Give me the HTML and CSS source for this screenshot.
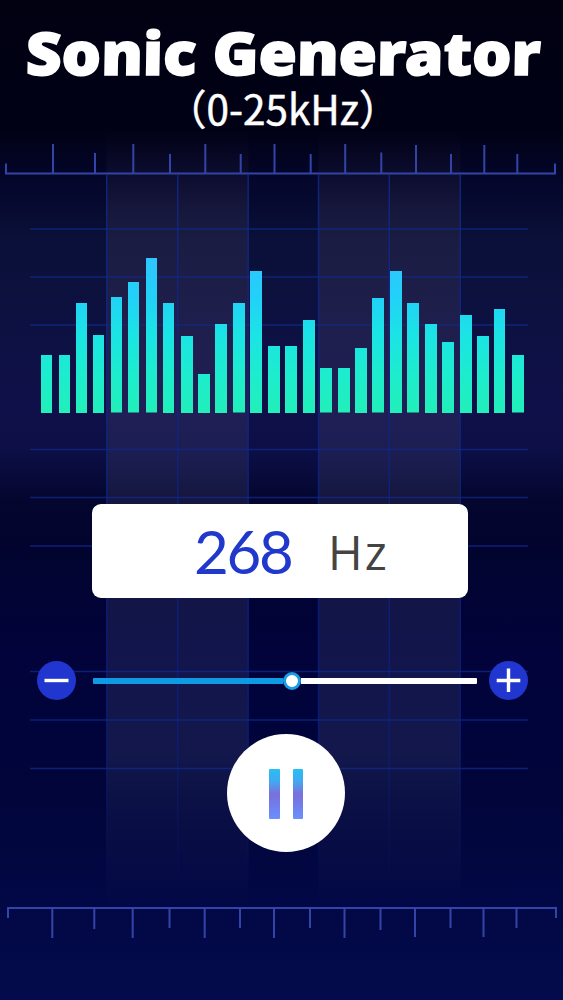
FILE: index.html
```html
<!DOCTYPE html>
<html lang="en">
<head>
<meta charset="utf-8">
<title>Sonic Generator</title>
<link rel="stylesheet" href="styles.css">
</head>
<body>
<main class="app">
  <svg class="backdrop" viewBox="0 0 563 1000" aria-hidden="true">
    <defs>
      <linearGradient id="band" gradientUnits="userSpaceOnUse" x1="0" y1="130" x2="0" y2="910">
        <stop offset="0" stop-color="#ffd0d8" stop-opacity="0"/>
        <stop offset=".05" stop-color="#ffd0d8" stop-opacity=".03"/>
        <stop offset=".1" stop-color="#ffd0d8" stop-opacity=".06"/>
        <stop offset=".2" stop-color="#ffd0d8" stop-opacity=".07"/>
        <stop offset=".5" stop-color="#d0d8ff" stop-opacity=".08"/>
        <stop offset=".8" stop-color="#c8d8ff" stop-opacity=".09"/>
        <stop offset=".88" stop-color="#c0d0ff" stop-opacity=".045"/>
        <stop offset="1" stop-color="#c0d0ff" stop-opacity="0"/>
      </linearGradient>
      <linearGradient id="rule" gradientUnits="userSpaceOnUse" x1="0" y1="175" x2="0" y2="885">
        <stop offset="0" stop-color="#10298a" stop-opacity=".85"/>
        <stop offset=".75" stop-color="#08208a" stop-opacity=".7"/>
        <stop offset="1" stop-color="#08208a" stop-opacity="0"/>
      </linearGradient>
    </defs>
    <path fill="url(#band)" d="M106.500 120h142v790h-142zM318.500 120h142v790h-142z"/>
    <path fill="url(#rule)" d="M106 175h1.400v710h-1.400zM177 175h1.400v710h-1.400zM247.500 175h1.400v710h-1.400zM317.800 175h1.400v710h-1.400zM388.600 175h1.400v710h-1.400zM459.600 175h1.400v710h-1.400z"/>
    <path class="grid-lines" d="M30 229H528M30 277H528M30 325H528M30 449.500H528M30 497.500H528M30 546H528M30 671.500H528M30 720H528M30 768.500H528"/>
  </svg>

  <header class="header">
    <h1 class="title">
      <svg class="title-art" viewBox="0 0 563 84">
        <text class="title-text" transform="translate(0 75.200) skewX(-1)" x="25.500" y="0" textLength="515" lengthAdjust="spacingAndGlyphs">Sonic Generator</text>
      </svg>
    </h1>
    <svg class="range" viewBox="0 0 563 54">
      <text class="range-text" x="166" y="40.500" textLength="233.500" lengthAdjust="spacingAndGlyphs">（0-25kHz）</text>
    </svg>
  </header>

  <svg class="ruler" viewBox="0 0 563 38" aria-hidden="true">
    <path d="M6 25.500V35.500H555V25.500M53 6V35M95 15V35M133.300 6V35M170 16V35M205.300 6V35M240.700 16V35M274.500 6V35M310.700 16V35M345.200 6V35M381.300 14.500V35M416 7V35M451 16V35M484.300 7V35M517.300 16V35"/>
  </svg>

  <section class="spectrum" aria-label="Spectrum">
    <i class="bar thin" style="height:58px"></i><i class="bar thin" style="height:58px"></i><i class="bar thin" style="height:110px"></i><i class="bar thin" style="height:78px"></i><i class="bar thin" style="height:115.500px"></i><i class="bar thin" style="height:130.500px"></i><i class="bar thin" style="height:154.500px"></i><i class="bar thin" style="height:110px"></i><i class="bar" style="height:77px"></i><i class="bar" style="height:39px"></i><i class="bar" style="height:89px"></i><i class="bar" style="height:109.500px"></i><i class="bar" style="height:142px"></i><i class="bar" style="height:67px"></i><i class="bar" style="height:67px"></i><i class="bar" style="height:93px"></i><i class="bar" style="height:44.500px"></i><i class="bar" style="height:44.500px"></i><i class="bar" style="height:65px"></i><i class="bar" style="height:114.500px"></i><i class="bar" style="height:142px"></i><i class="bar" style="height:109.500px"></i><i class="bar" style="height:89px"></i><i class="bar" style="height:71px"></i><i class="bar" style="height:98px"></i><i class="bar" style="height:77px"></i><i class="bar thin" style="height:104px"></i><i class="bar" style="height:57.500px"></i>
  </section>

  <section class="readout">
    <span class="value">268</span>
    <span class="unit">Hz</span>
  </section>

  <section class="tuner">
    <button class="step" aria-label="Decrease">
      <svg viewBox="0 0 39 39"><path d="M7.500 19.500H31.500"/></svg>
    </button>
    <div class="track">
      <div class="track-fill"></div>
      <div class="thumb"></div>
      <div class="track-rest"></div>
    </div>
    <button class="step" aria-label="Increase">
      <svg viewBox="0 0 39 39"><path d="M7.700 19.500H31.300M19.500 7.500V31"/></svg>
    </button>
  </section>

  <button class="pause" aria-label="Pause"><i class="pause-bar"></i><i class="pause-bar"></i></button>

  <svg class="ruler ruler-bottom" viewBox="0 0 563 38" aria-hidden="true">
    <path d="M8 14V4H556V14M52.300 4V34M94.300 4V25M132.700 4V34M169.500 4V24M204.700 4V34M240 4V24M274 4V34M310 4V24M344.500 4V34M380.500 4V26M415 4V33M450.500 4V24M483.500 4V33M516.500 4V24"/>
  </svg>
</main>
</body>
</html>
```
FILE: styles.css
```css
* { box-sizing: border-box; }

body { margin: 0; background: #000014; }

.app {
  position: relative;
  display: flex;
  flex-direction: column;
  align-items: center;
  width: 563px;
  height: 1000px;
  overflow: hidden;
  font-family: Lato, "Open Sans", sans-serif;
  background: linear-gradient(180deg,
    #010112 0, #010116 130px, #04062a 178px, #0a1038 240px, #0d1142 330px,
    #0f1049 410px, #0c0f45 450px, #04062f 500px, #02042e 540px,
    #01033a 650px, #01053a 800px, #020845 900px, #040b4c 1000px);
}

.app > * { flex: none; position: relative; }

.app > .backdrop {
  position: absolute;
  inset: 0;
  width: 563px;
  height: 1000px;
}

.grid-lines { stroke: #10298a; stroke-width: 1.3; stroke-opacity: .75; }

.header { width: 563px; height: 138px; }
.title { margin: 0; height: 84px; }
.title-art, .range { display: block; width: 563px; overflow: visible; }

.title-text {
  font: normal 900 59px "Noto Sans", sans-serif;
  fill: #fff;
  stroke: #fff;
  stroke-width: 1.6;
}

.range-text {
  font: 400 41.5px "Noto Sans CJK SC", sans-serif;
  fill: #fff;
  stroke: #fff;
  stroke-width: .5;
}

.ruler {
  display: block;
  width: 563px;
  height: 38px;
  fill: none;
  stroke: #3344a8;
  stroke-width: 2;
}

.spectrum {
  display: grid;
  grid-template-columns: repeat(28, 17.44px);
  align-items: end;
  width: 488.3px;
  height: 155px;
  margin: 81.7px 0 0 7.5px;
}

.bar {
  display: block;
  width: 12px;
  background: linear-gradient(0deg, #22efb9 0, #1deccf 40px, #1be3e6 80px, #22d1f7 115px, #2fc5ff 155px) bottom / 100% 155px no-repeat;
}

.bar.thin { width: 11px; }

.readout {
  display: flex;
  align-items: flex-start;
  width: 376px;
  height: 94px;
  margin: 91.3px 3px 0 0;
  padding: 11px 0 0 102px;
  border-radius: 9px;
  background: #fff;
}

.value { width: 134px; font-size: 60px; line-height: 72px; letter-spacing: -2.3px; color: #2138cd; }
.unit { padding-top: 7px; font: 400 47px/60px "Open Sans", sans-serif; letter-spacing: 2px; color: #444; }

.tuner {
  display: flex;
  align-items: center;
  justify-content: space-between;
  width: 491px;
  height: 39px;
  margin: 63.5px 0 0 2px;
}

.step {
  width: 39px;
  height: 39px;
  padding: 0;
  border: 0;
  border-radius: 50%;
  background: #2136cf;
}

.step svg { display: block; width: 39px; height: 39px; fill: none; stroke: #fff; stroke-width: 3.4; }

.track { display: flex; align-items: center; width: 384px; margin-left: 4px; }
.track-fill { width: 190px; height: 6.5px; border-radius: 1px 0 0 1px; background: #0f9be4; }
.thumb { width: 18px; height: 18px; border: 3px solid #1a9be2; border-radius: 50%; background: #fff; }
.track-rest { flex: 1; height: 6.5px; border-radius: 0 1px 1px 0; background: #fff; }

.pause {
  display: flex;
  align-items: center;
  justify-content: center;
  gap: 13px;
  width: 118.5px;
  height: 118.5px;
  margin: 33.5px 0 0 8.5px;
  padding: 2px 0 0 1px;
  border: 0;
  border-radius: 50%;
  background: #fff;
}

.pause-bar {
  width: 10.3px;
  height: 50px;
  border-radius: 1px;
  background: linear-gradient(180deg, #26c0f2 0, #42a8f0 25%, #7a70dc 50%, #7478e6 65%, #6a90ff 100%);
}

.ruler-bottom { margin-top: 51.5px; }
```
